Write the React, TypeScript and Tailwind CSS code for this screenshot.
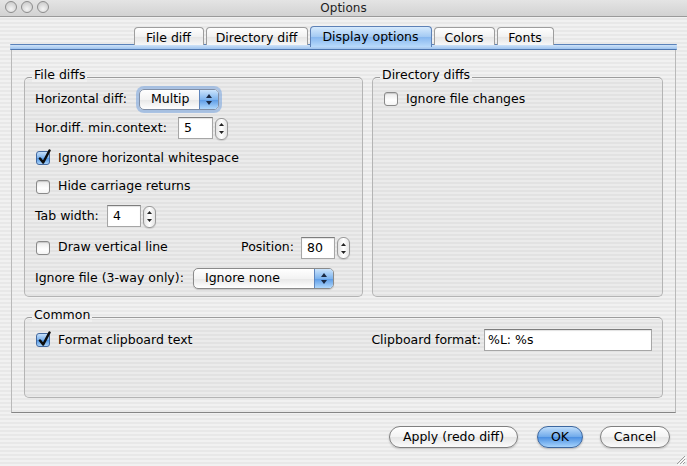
import React from "react";

const stripe =
  "bg-[image:repeating-linear-gradient(180deg,#f1f1f1_0px,#f1f1f1_2px,#e8e8e8_2px,#e8e8e8_4px)]";

function Check({ checked }: { checked?: boolean }) {
  return (
    <span
      className={
        checked
          ? "relative inline-block w-[14px] h-[14px] shrink-0 rounded-[3px] border border-[#44699f] bg-[linear-gradient(180deg,#c6e0fa_0%,#79b0ec_50%,#4f94e2_51%,#a8d2fa_100%)]"
          : "relative inline-block w-[14px] h-[14px] shrink-0 rounded-[3px] border border-[#8a8a8a] bg-[linear-gradient(180deg,#e9e9e9_0%,#ffffff_60%,#f4f4f4_100%)] shadow-[inset_0_1px_1px_rgba(0,0,0,0.15)]"
      }
    >
      {checked && (
        <svg
          className="absolute left-[1px] -top-[3px]"
          width="14"
          height="16"
          viewBox="0 0 14 16"
        >
          <path
            d="M2 9.5 L5.2 13.5 L11.5 1.5"
            fill="none"
            stroke="#0d0d0d"
            strokeWidth="2.5"
            strokeLinecap="round"
            strokeLinejoin="round"
          />
        </svg>
      )}
    </span>
  );
}

function Spinner() {
  return (
    <span className="inline-flex flex-col items-center justify-center gap-[5px] w-[13px] h-[22px] shrink-0 rounded-[6px] border border-[#9a9a9a] bg-[linear-gradient(90deg,#e3e3e3,#ffffff_50%,#e3e3e3)] shadow-[0_1px_1px_rgba(0,0,0,0.12)]">
      <svg width="5" height="3" viewBox="0 0 5 3">
        <path d="M0 3 L2.5 0 L5 3 Z" fill="#222" />
      </svg>
      <svg width="5" height="3" viewBox="0 0 5 3">
        <path d="M0 0 L2.5 3 L5 0 Z" fill="#222" />
      </svg>
    </span>
  );
}

function TextBox({ value, w }: { value: string; w: string }) {
  return (
    <span
      className={
        "inline-flex items-center h-[22px] shrink-0 bg-white border border-[#a6a6a6] border-t-[#7d7d7d] px-[5px] pt-[1px] shadow-[inset_0_1px_1px_rgba(0,0,0,0.12)] " +
        w
      }
    >
      {value}
    </span>
  );
}

function Arrows() {
  return (
    <span className="flex flex-col items-center justify-center gap-[3px] w-[19px] shrink-0 border-l border-[#5f86bd] bg-[linear-gradient(180deg,#cbe4fc_0%,#7eb4ee_50%,#5a9ae6_51%,#b0d8fc_100%)]">
      <svg width="6" height="4" viewBox="0 0 6 4">
        <path d="M0 4 L3 0 L6 4 Z" fill="#1b2a44" />
      </svg>
      <svg width="6" height="4" viewBox="0 0 6 4">
        <path d="M0 0 L3 4 L6 0 Z" fill="#1b2a44" />
      </svg>
    </span>
  );
}

function Popup({ label, w, focus }: { label: string; w: string; focus?: boolean }) {
  return (
    <span
      className={
        focus
          ? "flex h-[21px] shrink-0 overflow-hidden rounded-[5px] border border-[#7f8ea6] bg-[linear-gradient(180deg,#ffffff_0%,#f3f3f3_50%,#e7e7e7_51%,#ffffff_100%)] shadow-[0_0_0_3px_rgba(126,168,224,0.6)] " + w
          : "flex h-[21px] shrink-0 overflow-hidden rounded-[5px] border border-[#8a8a8a] bg-[linear-gradient(180deg,#ffffff_0%,#f3f3f3_50%,#e7e7e7_51%,#ffffff_100%)] shadow-[0_1px_1px_rgba(0,0,0,0.15)] " + w
      }
    >
      <span className="flex flex-1 items-center pl-[11px] pt-[1px]">{label}</span>
      <Arrows />
    </span>
  );
}

function Group({
  title,
  className,
  children,
}: {
  title: string;
  className: string;
  children: React.ReactNode;
}) {
  return (
    <div
      className={
        "relative rounded-[5px] border border-[#b4b4b4] border-t-[#9c9c9c] bg-black/[0.025] shadow-[inset_0_1px_0_rgba(255,255,255,0.6)] " +
        className
      }
    >
      <span
        className={
          "absolute left-[7px] -top-[11px] px-[2px] leading-[15px] bg-fixed " + stripe
        }
      >
        {title}
      </span>
      {children}
    </div>
  );
}

function Tab({ label, w, selected }: { label: string; w: string; selected?: boolean }) {
  return (
    <div
      className={
        selected
          ? "relative z-10 -mb-[2px] flex h-[21px] items-center justify-center rounded-t-[4px] border border-b-0 border-[#5d81b6] pt-[1px] bg-[linear-gradient(180deg,#d6eafd_0%,#a2c9f3_50%,#86b7ef_51%,#b9dafb_100%)] " + w
          : "flex h-[18px] items-center justify-center rounded-t-[4px] border border-b-0 border-[#9d9d9d] pt-[3px] bg-[linear-gradient(180deg,#ffffff_0%,#f1f1f1_50%,#e4e4e4_51%,#f7f7f7_100%)] " + w
      }
    >
      {label}
    </div>
  );
}

function Button({ label, w, primary }: { label: string; w: string; primary?: boolean }) {
  return (
    <div
      className={
        primary
          ? "flex h-[22px] items-center justify-center rounded-full border border-[#3d679f] pt-[1px] bg-[linear-gradient(180deg,#c0defb_0%,#6ea9ea_50%,#4a8fe2_51%,#a6d3fc_100%)] shadow-[0_1px_2px_rgba(0,0,0,0.25)] " + w
          : "flex h-[22px] items-center justify-center rounded-full border border-[#7f7f7f] pt-[1px] bg-[linear-gradient(180deg,#ffffff_0%,#f3f3f3_50%,#e5e5e5_51%,#fbfbfb_100%)] shadow-[0_1px_2px_rgba(0,0,0,0.2)] " + w
      }
    >
      {label}
    </div>
  );
}

export default function App() {
  return (
    <div
      className={
        "relative w-[687px] h-[466px] overflow-hidden text-[12.5px] leading-none text-black font-['Lucida_Grande','DejaVu_Sans',sans-serif] " +
        stripe
      }
    >
      {/* title bar */}
      <div className="relative flex h-[17px] items-center justify-center border-b border-[#9a9a9a] bg-[linear-gradient(180deg,#e4e4e4,#d2d2d2)] text-[12px] text-[#1e1e1e]">
        <div className="absolute left-[5px] top-[1px] flex gap-[4px]">
          <span className="w-[12px] h-[12px] rounded-full border border-[#8d8d8d] bg-[radial-gradient(circle_at_50%_70%,#f4f4f4,#c3c3c3)]" />
          <span className="w-[12px] h-[12px] rounded-full border border-[#8d8d8d] bg-[radial-gradient(circle_at_50%_70%,#f4f4f4,#c3c3c3)]" />
          <span className="w-[12px] h-[12px] rounded-full border border-[#8d8d8d] bg-[radial-gradient(circle_at_50%_70%,#f4f4f4,#c3c3c3)]" />
        </div>
        <span>Options</span>
      </div>

      {/* tabs */}
      <div className="mt-[10px] flex h-[18px] items-end justify-center gap-[2px] text-[12.5px]">
        <Tab label="File diff" w="w-[70px]" />
        <Tab label="Directory diff" w="w-[102px]" />
        <Tab label="Display options" w="w-[122px]" selected />
        <Tab label="Colors" w="w-[61px]" />
        <Tab label="Fonts" w="w-[57px]" />
      </div>

      {/* pane */}
      <div className="mx-[10px] -mt-[1px]">
        <div className="h-[6px] rounded-[1px] bg-[linear-gradient(180deg,#5a82ba_0px,#5a82ba_1px,#cfe3f8_1px,#9ec3ee_5px,#4e77b0_5px,#4e77b0_6px)]" />
        <div className="mx-[1px] h-[363px] border-x border-b border-[#b9b9b9] border-b-[#858585] px-[12px] pt-[27px]">
          <div className="flex h-[220px] gap-[9px]">
            <Group title="File diffs" className="w-[339px] pl-[10px] pr-[12px] pt-[7px]">
              <div className="flex h-[28px] items-center">
                <span className="w-[104px]">Horizontal diff:</span>
                <Popup label="Multip" w="w-[80px]" focus />
              </div>
              <div className="flex h-[30px] items-center">
                <span className="w-[143px]">Hor.diff. min.context:</span>
                <TextBox value="5" w="w-[35px]" />
                <span className="ml-[2px]">
                  <Spinner />
                </span>
              </div>
              <div className="flex h-[30px] items-center gap-[8px] pl-[1px]">
                <Check checked />
                <span>Ignore horizontal whitespace</span>
              </div>
              <div className="flex h-[27px] items-center gap-[8px] pl-[1px]">
                <Check />
                <span>Hide carriage returns</span>
              </div>
              <div className="flex h-[32px] items-center">
                <span className="w-[72px]">Tab width:</span>
                <TextBox value="4" w="w-[34px]" />
                <span className="ml-[2px]">
                  <Spinner />
                </span>
              </div>
              <div className="flex h-[31px] items-center pl-[1px]">
                <Check />
                <span className="ml-[8px]">Draw vertical line</span>
                <span className="ml-auto mr-[7px]">Position:</span>
                <TextBox value="80" w="w-[34px]" />
                <span className="ml-[2px]">
                  <Spinner />
                </span>
              </div>
              <div className="flex h-[30px] items-center">
                <span className="w-[158px]">Ignore file (3-way only):</span>
                <Popup label="Ignore none" w="w-[141px]" />
              </div>
            </Group>
            <Group title="Directory diffs" className="flex-1 pl-[11px] pt-[7px]">
              <div className="flex h-[28px] items-center gap-[8px]">
                <Check />
                <span>Ignore file changes</span>
              </div>
            </Group>
          </div>
          <Group title="Common" className="mt-[20px] h-[81px] pl-[11px] pr-[10px] pt-[8px]">
            <div className="flex h-[28px] items-center">
              <Check checked />
              <span className="ml-[8px]">Format clipboard text</span>
              <span className="ml-auto mr-[3px]">Clipboard format:</span>
              <span className="inline-flex h-[22px] w-[168px] items-center border border-[#a6a6a6] border-t-[#7d7d7d] bg-white px-[3px] pt-[1px] shadow-[inset_0_1px_1px_rgba(0,0,0,0.12)]">
                %L: %s
              </span>
            </div>
          </Group>
        </div>
      </div>

      {/* buttons */}
      <div className="mt-[13px] flex justify-end gap-[19px] pr-[17px]">
        <Button label="Apply (redo diff)" w="w-[129px]" />
        <div className="flex gap-[17px]">
          <Button label="OK" w="w-[46px]" primary />
          <Button label="Cancel" w="w-[70px]" />
        </div>
      </div>

      {/* resize grip */}
      <svg className="absolute right-[1px] bottom-[1px]" width="11" height="11" viewBox="0 0 11 11">
        <path d="M10 2 L2 10 M10 5 L5 10 M10 8 L8 10" stroke="#9c9c9c" strokeWidth="1" />
        <path d="M11 3 L3 11 M11 6 L6 11" stroke="#ffffff" strokeWidth="1" />
      </svg>
    </div>
  );
}
